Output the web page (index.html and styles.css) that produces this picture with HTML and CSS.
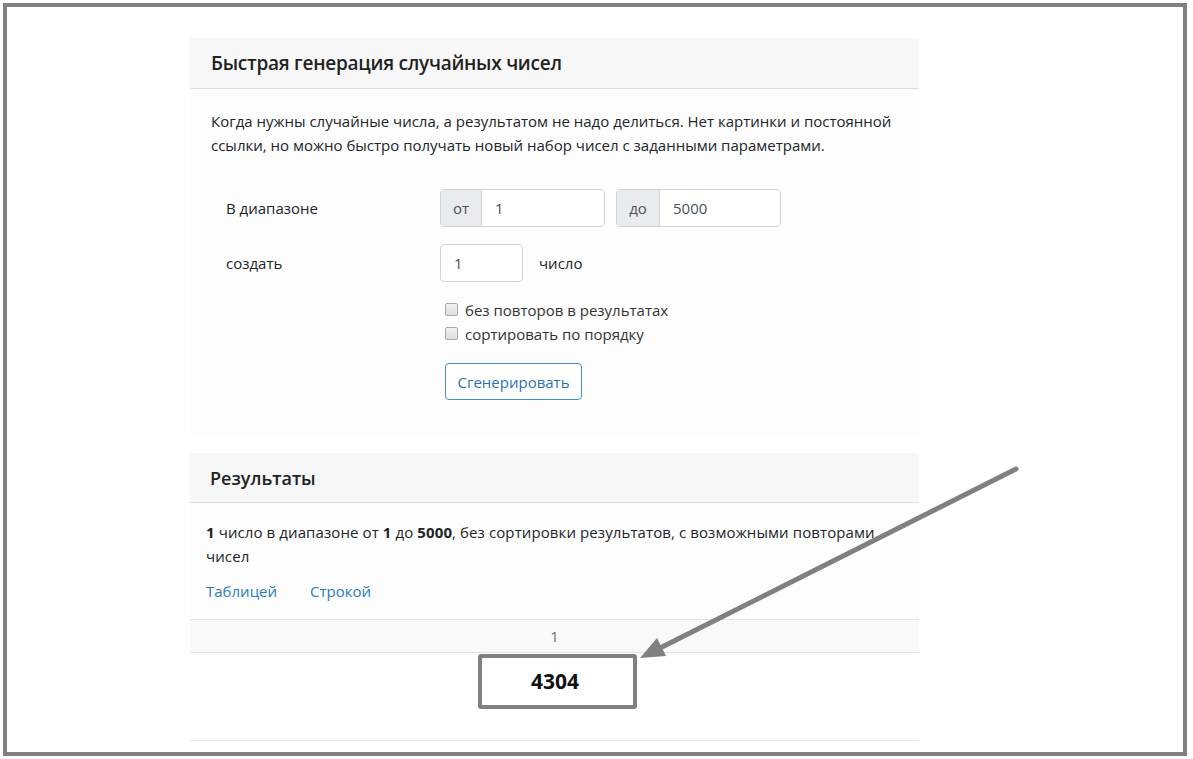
FILE: index.html
```html
<!DOCTYPE html>
<html lang="ru">
<head>
<meta charset="utf-8">
<title>Быстрая генерация случайных чисел</title>
<link rel="stylesheet" href="styles.css">
</head>
<body>
<div class="frame">
  <div class="container">
    <section class="card card-form">
      <div class="card-header"><h2>Быстрая генерация случайных чисел</h2></div>
      <div class="card-body">
        <p class="lead">Когда нужны случайные числа, а результатом не надо делиться. Нет картинки и постоянной ссылки, но можно быстро получать новый набор чисел с заданными параметрами.</p>
        <div class="form">
          <div class="form-row">
            <label class="form-label">В диапазоне</label>
            <div class="form-controls">
              <div class="input-group">
                <span class="addon addon-from">от</span>
                <span class="input">1</span>
              </div>
              <div class="input-group">
                <span class="addon addon-to">до</span>
                <span class="input">5000</span>
              </div>
            </div>
          </div>
          <div class="form-row row-count">
            <label class="form-label">создать</label>
            <div class="form-controls">
              <span class="input input-small">1</span>
              <span class="unit">число</span>
            </div>
          </div>
          <div class="form-row row-checks">
            <span class="form-label"></span>
            <div class="checks">
              <label class="check"><span class="box"></span>без повторов в результатах</label>
              <label class="check"><span class="box"></span>сортировать по порядку</label>
              <button class="btn">Сгенерировать</button>
            </div>
          </div>
        </div>
      </div>
    </section>

    <section class="card card-results">
      <div class="card-header"><h2>Результаты</h2></div>
      <div class="results-body">
        <p class="summary"><b>1</b> число в диапазоне от <b>1</b> до <b>5000</b>, без сортировки результатов, с возможными повторами чисел</p>
        <nav class="views"><a href="#">Таблицей</a><a href="#">Строкой</a></nav>
      </div>
      <div class="table">
        <div class="thead">1</div>
        <div class="tbody">
          <span class="value">4304</span>
          <span class="highlight"></span>
        </div>
      </div>
    </section>
  </div>
  <svg class="arrow" width="1193" height="759" viewBox="0 0 1193 759">
    <line x1="1016" y1="469" x2="660" y2="648" stroke="#808080" stroke-width="5" stroke-linecap="round"/>
    <polygon points="640,658 666,656 657,638" fill="#808080"/>
  </svg>
</div>
</body>
</html>
```

FILE: styles.css
```css
* { box-sizing: border-box; }
html, body { margin: 0; padding: 0; background: #fff; }
body {
  font-family: "Open Sans", "Noto Sans", "Liberation Sans", sans-serif;
  font-size: 15px;
  line-height: 24px;
  color: #212529;
}
.frame {
  position: relative;
  margin: 3px 6px 3px 3px;
  height: 753px;
  border: 4px solid #808080;
  overflow: hidden;
}
.container {
  width: 729px;
  margin-left: 183px;
  padding-top: 31px;
}
.card {
  background: #fdfdfd;
}
.card-header {
  height: 51px;
  background: #f7f7f7;
  border-bottom: 1px solid #dedede;
  display: flex;
  align-items: center;
  padding-left: 21px;
}
.card-header h2 {
  margin: 0;
  font-size: 19px;
  font-weight: 600;
  color: #222;
  letter-spacing: -0.25px;
}
.card-body {
  padding: 20px 21px 35px 21px;
}
.lead {
  margin: 0;
  font-size: 15px;
}
.form { margin-top: 32px; }
.form-row {
  display: flex;
  align-items: center;
}
.form-label {
  width: 229px;
  padding-left: 15px;
  flex: none;
}
.form-controls {
  display: flex;
  align-items: center;
  gap: 11px;
}
.row-count { margin-top: 17px; }
.row-count .form-controls { gap: 16px; }
.input-group {
  display: flex;
  width: 165px;
  height: 38px;
  border: 1px solid #ced4da;
  border-radius: 4px;
  overflow: hidden;
}
.addon {
  display: flex;
  align-items: center;
  justify-content: center;
  background: #e9ecef;
  border-right: 1px solid #ced4da;
  color: #495057;
  flex: none;
}
.addon-from { width: 41px; }
.addon-to { width: 43px; }
.input-group .input {
  border: none;
  height: auto;
  flex: 1;
}
.input {
  display: flex;
  align-items: center;
  padding-left: 13px;
  height: 38px;
  background: #fff;
  color: #495057;
}
.input-small {
  width: 83px;
  border: 1px solid #ced4da;
  border-radius: 4px;
}
.row-checks {
  align-items: flex-start;
  margin-top: 16px;
}
.checks {
  display: flex;
  flex-direction: column;
  align-items: flex-start;
  padding-left: 5px;
}
.check {
  display: flex;
  align-items: center;
  height: 24px;
  color: #333;
}
.box {
  width: 13px;
  height: 13px;
  margin-right: 7px;
  margin-top: -2px;
  border: 1px solid #a9a9a9;
  border-radius: 2px;
  background: linear-gradient(#f2f2f2, #dcdcdc);
}
.btn {
  margin-top: 17px;
  width: 137px;
  height: 37px;
  border: 1px solid #3c94c8;
  border-radius: 4px;
  background: #fff;
  color: #2c72b0;
  font-family: inherit;
  font-size: 15px;
  padding: 0;
}
.card-results { margin-top: 18px; }
.card-results .card-header { height: 50px; padding-left: 20px; }
.card-results .card-header h2 { font-size: 18px; letter-spacing: 0; }
.results-body {
  padding: 17px 16px 16px 16px;
}
.summary {
  margin: 0;
  font-size: 15px;
  letter-spacing: 0.1px;
}
.summary b { font-weight: 700; }
.views {
  margin-top: 11px;
  display: flex;
  gap: 33px;
}
.views a {
  color: #2a7cb8;
  text-decoration: none;
}
.table {
  border-top: 1px solid #e2e2e2;
  background: #fff;
}
.thead {
  height: 33px;
  background: #f9f9f9;
  border-bottom: 1px solid #e2e2e2;
  text-align: center;
  line-height: 33px;
  color: #6f6f6f;
  font-size: 15px;
}
.tbody {
  position: relative;
  height: 88px;
  border-bottom: 1px solid #e6e6e6;
  display: flex;
  justify-content: center;
  padding-top: 16px;
}
.value {
  font-weight: 700;
  font-size: 21px;
  line-height: 24px;
  color: #111;
  padding-left: 1px;
}
.highlight {
  position: absolute;
  left: 288px;
  top: 1px;
  width: 159px;
  height: 55px;
  border: 4px solid #808080;
  border-radius: 3px;
}
.arrow {
  position: absolute;
  left: -7px;
  top: -7px;
  pointer-events: none;
}
```
